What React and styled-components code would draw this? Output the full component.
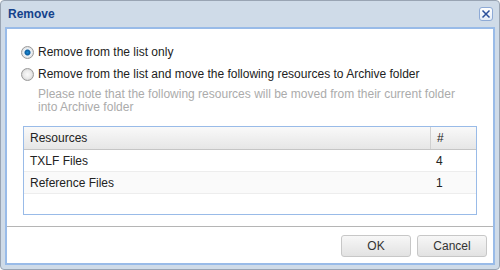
import React, { useState } from 'react'
import styled, { createGlobalStyle } from 'styled-components'

const GlobalStyle = createGlobalStyle`
html, body {
  margin: 0;
  padding: 0;
  background: #fff;
}
body {
  font-family: "Liberation Sans", Arial, sans-serif;
  font-size: 12px;
  color: #222;
}
`

const Window = styled.div`
box-sizing: border-box;
width: 500px;
height: 270px;
background: #cfdbe8;
border: 1px solid #99a4b3;
border-radius: 4px;
padding: 0 4px 4px 4px;
display: flex;
flex-direction: column;
`

const TitleBar = styled.div`
height: 26px;
display: flex;
align-items: center;
justify-content: space-between;
padding: 0 2px 0 3px;
`

const Title = styled.div`
font-weight: bold;
font-size: 12px;
color: #15428b;
`

const CloseButton = styled.button`
box-sizing: border-box;
width: 14px;
height: 14px;
padding: 0;
border: 1px solid #8eaad6;
border-radius: 3px;
background: linear-gradient(#ffffff, #e4ecf7);
display: flex;
align-items: center;
justify-content: center;
cursor: pointer;
`

const Body = styled.div`
flex: 1;
background: #fff;
border: 2px solid #99bbe8;
display: flex;
flex-direction: column;
`

const Content = styled.div`
flex: 1;
padding: 12px 16px 0 14px;
`

const Option = styled.label`
display: flex;
align-items: center;
gap: 4px;
height: 22px;
color: #222;
`

const Radio = styled.span`
box-sizing: border-box;
width: 13px;
height: 13px;
border-radius: 50%;
border: 1px solid #9a9a9a;
background: ${({ checked }) =>
  checked
    ? 'radial-gradient(circle, #1a8ad6 0, #0b5d9e 2.5px, #eef3f8 3.5px, #dcdcdc 6px)'
    : 'radial-gradient(circle, #fafafa 0, #e9e9e9 4px, #d2d2d2 6px)'};
`

const Note = styled.div`
color: #ababab;
padding-left: 17px;
margin-top: 3px;
line-height: 13px;
`

const Table = styled.div`
box-sizing: border-box;
margin: 12px 0 0 2px;
border: 1px solid #99bbe8;
height: 89px;
display: flex;
flex-direction: column;
`

const Row = styled.div`
display: grid;
grid-template-columns: 1fr 46px;
height: ${({ head }) => (head ? '22px' : '21px')};
background: ${({ head }) => (head ? 'linear-gradient(#f9f9f9, #e6e6e6)' : '#fff')};
border-bottom: 1px solid ${({ head }) => (head ? '#c5c5c5' : '#ededed')};
&:nth-child(odd) {
  background: ${({ head }) => (head ? 'linear-gradient(#f9f9f9, #e6e6e6)' : '#fafafa')};
}
`

const Cell = styled.div`
display: flex;
align-items: center;
padding-left: 6px;
border-left: ${({ divider }) => (divider ? '1px solid #d0d0d0' : 'none')};
`

const Footer = styled.div`
height: 35px;
border-top: 1px solid #b5b5b5;
display: flex;
justify-content: flex-end;
align-items: center;
gap: 6px;
padding-right: 6px;
padding-top: 1px;
`

const Button = styled.button`
box-sizing: border-box;
width: 70px;
height: 22px;
border: 1px solid #c7c7c7;
border-radius: 3px;
background: linear-gradient(#f7f7f7, #e2e2e2);
font-family: "Liberation Sans", Arial, sans-serif;
font-size: 12px;
color: #333;
cursor: pointer;
`

const resources = [
  { name: 'TXLF Files', count: 4 },
  { name: 'Reference Files', count: 1 },
]

function App() {
  const [choice, setChoice] = useState('list')
  return (
    <>
      <GlobalStyle />
      <Window>
        <TitleBar>
          <Title>Remove</Title>
          <CloseButton aria-label="Close">
            <svg width="10" height="10" viewBox="0 0 10 10">
              <path d="M1.5 1.5 L8.5 8.5 M8.5 1.5 L1.5 8.5" stroke="#2a4f9a" strokeWidth="1.5" />
            </svg>
          </CloseButton>
        </TitleBar>
        <Body>
          <Content>
            <Option onClick={() => setChoice('list')}>
              <Radio checked={choice === 'list'} />
              Remove from the list only
            </Option>
            <Option onClick={() => setChoice('archive')}>
              <Radio checked={choice === 'archive'} />
              Remove from the list and move the following resources to Archive folder
            </Option>
            <Note>
              Please note that the following resources will be moved from their current folder
              <br />
              into Archive folder
            </Note>
            <Table>
              <Row head>
                <Cell>Resources</Cell>
                <Cell divider>#</Cell>
              </Row>
              {resources.map((r) => (
                <Row key={r.name}>
                  <Cell>{r.name}</Cell>
                  <Cell>{r.count}</Cell>
                </Row>
              ))}
            </Table>
          </Content>
          <Footer>
            <Button>OK</Button>
            <Button>Cancel</Button>
          </Footer>
        </Body>
      </Window>
    </>
  )
}

export default App
